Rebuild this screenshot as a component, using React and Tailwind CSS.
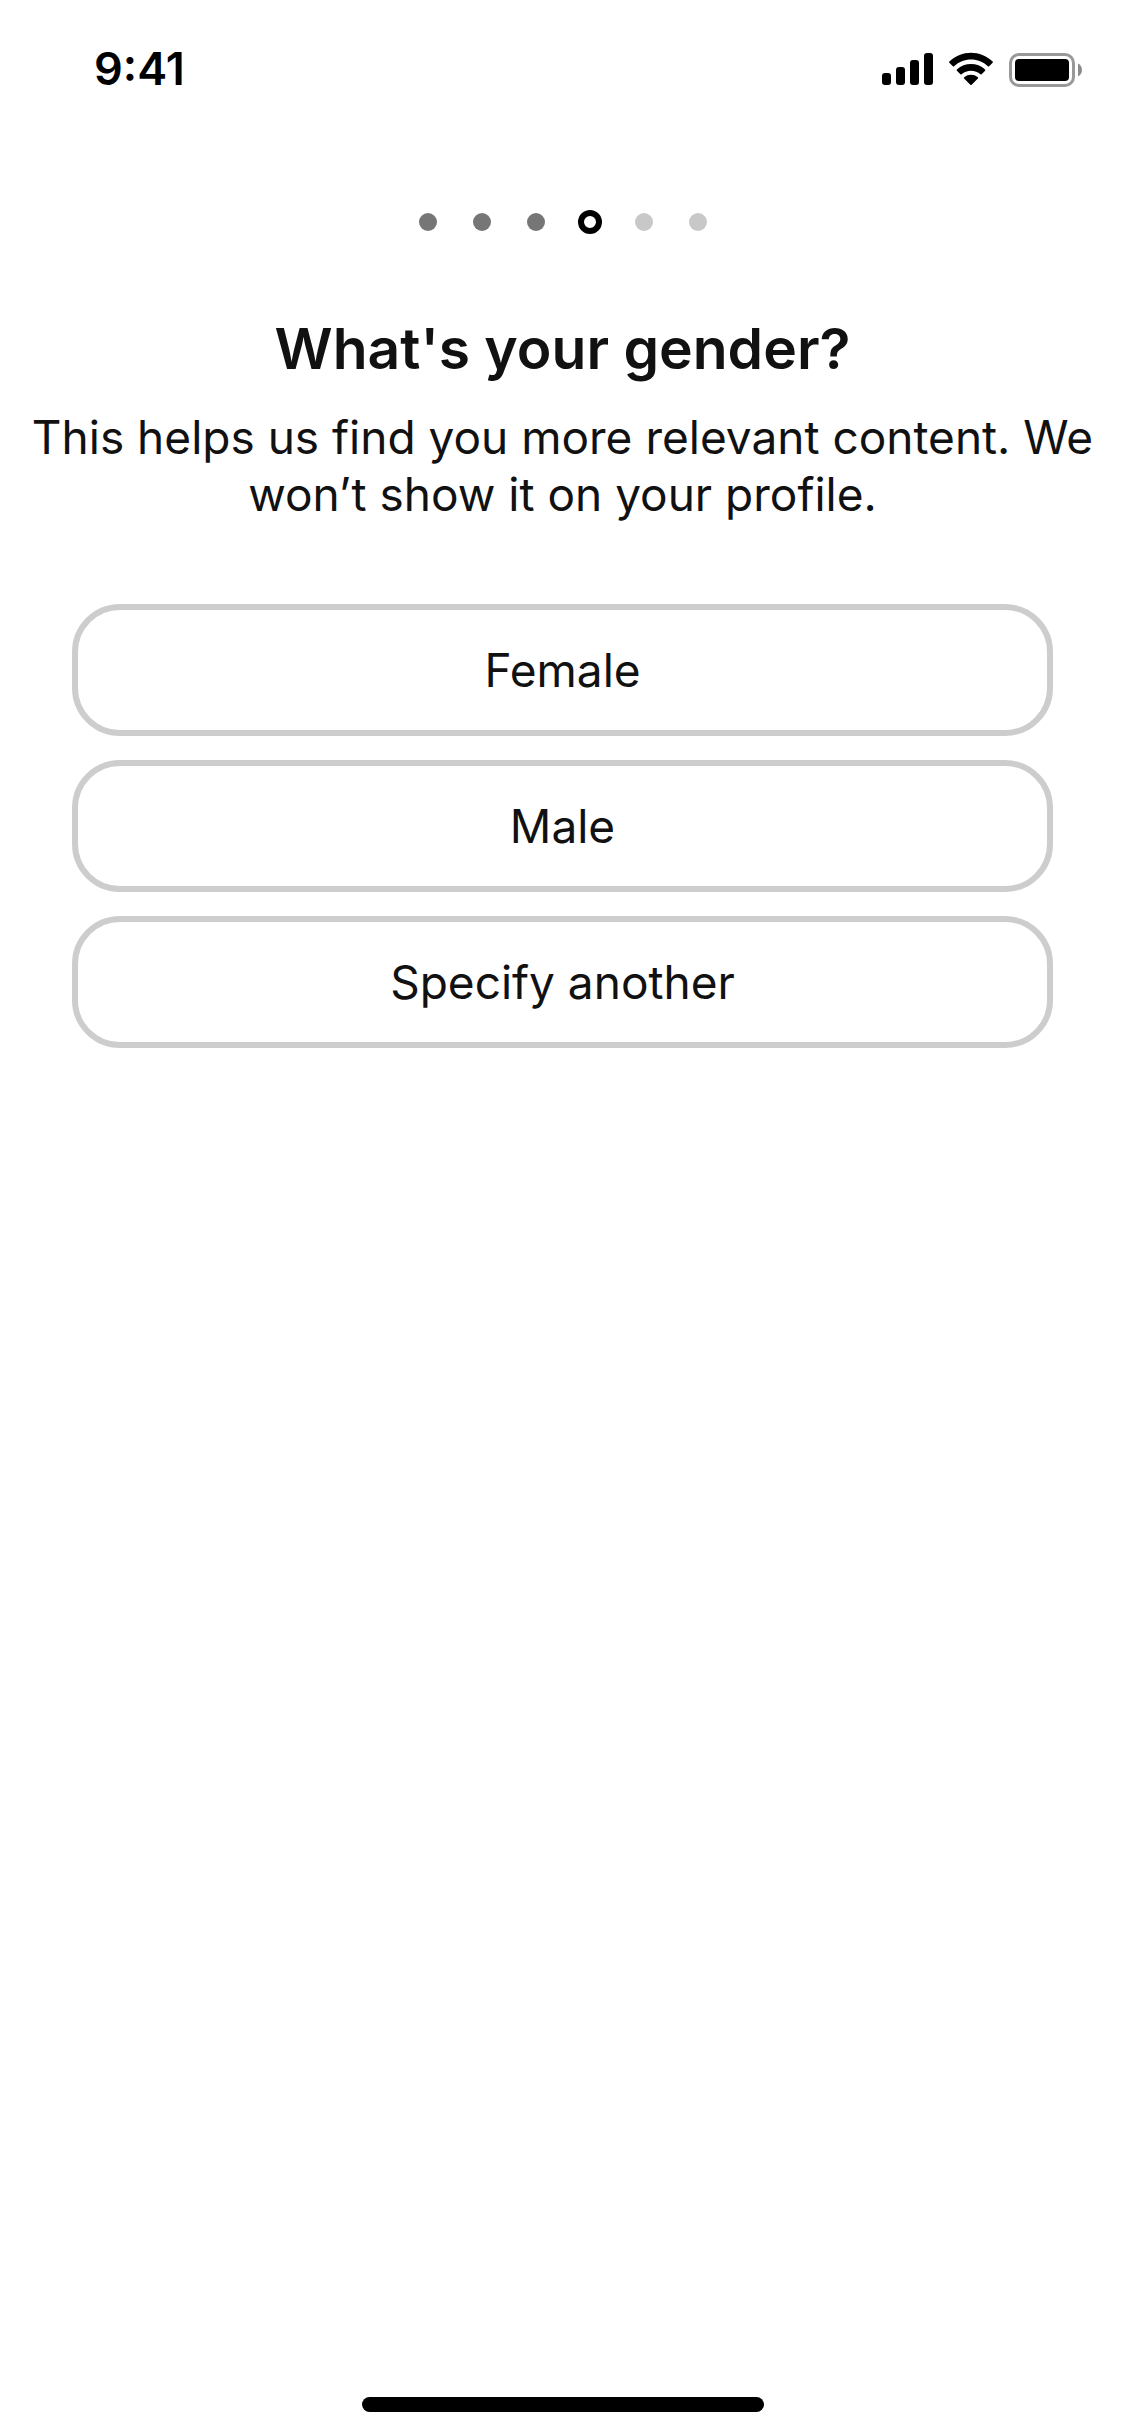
import { useState } from "react";
import clsx from "clsx";

const TOTAL_STEPS = 6;
const CURRENT_STEP = 3;
const OPTIONS = ["Female", "Male", "Specify another"];

function StatusBar() {
  return (
    <header className="flex h-[138px] items-center justify-between pr-[42px] pl-[94px] text-black">
      <span className="text-[45px] leading-[52px] font-semibold">9:41</span>

      <div className="flex items-center gap-[15px]">
        {/* Signal */}
        <svg width="51" height="36" viewBox="0 -2 51 36" fill="currentColor" aria-hidden="true">
          <rect x="0" y="20" width="9" height="12" rx="3" />
          <rect x="14" y="14" width="9" height="18" rx="3" />
          <rect x="28" y="7" width="9" height="25" rx="3" />
          <rect x="42" y="0" width="9" height="32" rx="3" />
        </svg>

        {/* Wi-Fi */}
        <svg width="46" height="36" viewBox="0 -2 46 36" fill="currentColor" aria-hidden="true">
          <path d="M23 6.6c6.300 0 12.300 2.400 16.900 6.700.35.330.9.320 1.240 0l3.500-3.500c.37-.37.370-.95 0-1.300C32.500-3.100 13.500-3.100 1.360 8.500c-.37.350-.37.930 0 1.300l3.500 3.500c.34.320.9.330 1.240 0C10.700 9 16.700 6.600 23 6.600z" />
          <path d="M23 17.700c3.500 0 6.800 1.300 9.400 3.600.35.320.9.310 1.220-.02l3.500-3.500c.36-.36.350-.96-.02-1.300-7.900-7.300-20.300-7.300-28.200 0-.37.340-.38.940-.02 1.300l3.500 3.500c.33.330.87.340 1.220.02 2.600-2.300 5.900-3.600 9.400-3.600z" />
          <path d="M29.900 25.500c.38-.36.380-.95-.02-1.300-4-3.300-9.760-3.300-13.760 0-.4.350-.4.940-.02 1.300l6.200 6.200c.36.380.98.380 1.360 0z" />
        </svg>

        {/* Battery */}
        <svg width="74" height="36" viewBox="0 -2 74 36" aria-hidden="true">
          <rect x="1.500" y="1.500" width="63" height="31" rx="8.500" fill="none" stroke="#999999" strokeWidth="3" />
          <rect x="6" y="6" width="54" height="22" rx="4" fill="#000000" />
          <path d="M69 10.500c5.300 2.300 5.300 10.700 0 13z" fill="#8c8c8c" />
        </svg>
      </div>
    </header>
  );
}

function StepDots() {
  return (
    <div className="mt-[66px] flex h-9 items-center justify-center" aria-hidden="true">
      {Array.from({ length: TOTAL_STEPS }, (_, i) => (
        <span key={i} className="flex w-[54px] justify-center">
          <span
            className={clsx(
              "rounded-full",
              i < CURRENT_STEP && "size-[18px] bg-[#767676]",
              i === CURRENT_STEP && "size-6 border-6 border-black",
              i > CURRENT_STEP && "size-[18px] bg-[#c8c8c8]"
            )}
          />
        </span>
      ))}
    </div>
  );
}

function App() {
  const [selected, setSelected] = useState(null);

  return (
    <div className="flex min-h-screen flex-col bg-white font-[Inter,'Liberation_Sans',sans-serif] text-[#111111]">
      <StatusBar />

      <main className="flex flex-1 flex-col">
        <StepDots />

        <section className="mt-[73px] px-6 text-center">
          <h1 className="text-[57px] leading-[72px] font-semibold">
            What's your gender?
          </h1>
          <p className="mt-6 text-[46px] leading-[57px]">
            This helps us find you more relevant content. We won’t show it on your profile.
          </p>
        </section>

        <div className="mt-[81px] flex flex-col gap-6 px-[72px]">
          {OPTIONS.map((option) => (
            <button
              key={option}
              type="button"
              aria-pressed={selected === option}
              onClick={() => setSelected(option)}
              className="h-[132px] rounded-[48px] border-6 border-[#cdcdcd] text-[46px] leading-[57px] aria-pressed:border-[#111111]"
            >
              {option}
            </button>
          ))}
        </div>
      </main>

      {/* Home indicator */}
      <footer className="flex justify-center pb-6">
        <div className="h-[15px] w-[402px] rounded-full bg-black" />
      </footer>
    </div>
  );
}

export default App;
